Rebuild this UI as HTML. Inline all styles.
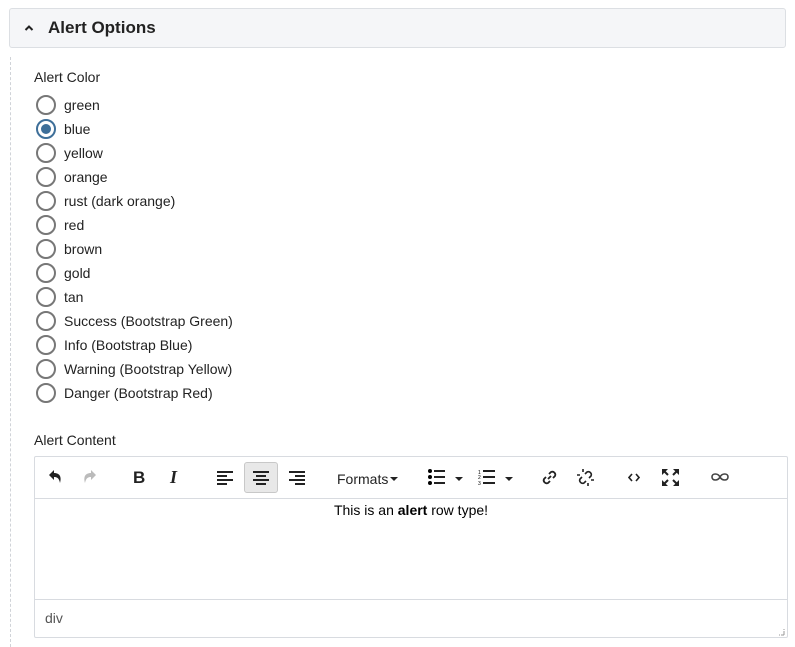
<!DOCTYPE html>
<html><head><style>
body{margin:0;width:795px;height:643px;background:#fff;font-family:"Liberation Sans",sans-serif;color:#222;position:relative;overflow:hidden}
.hdr{position:absolute;left:9px;top:8px;width:775px;height:38px;background:#f5f6f8;border:1px solid #dcdfe3;border-radius:3px}
.hdr .t{position:absolute;left:38px;top:9px;font-size:17px;font-weight:bold;color:#222}
.hdr svg{position:absolute;left:14px;top:15px}
.dash{position:absolute;left:10px;top:57px;height:590px;border-left:1px dashed #d0d3d8}
.lbl{position:absolute;left:34px;font-size:14px;color:#222}
.r{position:absolute;left:36px;width:16px;height:16px;border:2px solid #777;border-radius:50%;box-sizing:content-box}
.r.on{border-color:#3e6f99}
.r.on:after{content:"";position:absolute;left:3px;top:3px;width:10px;height:10px;border-radius:50%;background:#3e6f99}
.rt{position:absolute;left:64px;font-size:14px;color:#222}
.ed{position:absolute;left:34px;top:456px;width:752px;height:180px;border:1px solid #d8dbe0;border-radius:2px}
.tb{position:absolute;left:0;top:0;width:752px;height:41px;border-bottom:1px solid #d8dbe0}
.ct{position:absolute;left:0;top:42px;width:752px;text-align:center;font-size:14px;color:#000;line-height:22px}
.sb{position:absolute;left:0;top:142px;width:752px;height:38px;border-top:1px solid #d8dbe0}
.sb span{position:absolute;left:10px;top:10px;font-size:14px;color:#555}
.ic{position:absolute;top:12px}
.act{position:absolute;left:209px;top:5px;width:32px;height:29px;background:#e8e8e8;border:1px solid #c8c8c8;border-radius:3px}
</style></head><body>
<div class="hdr"><svg width="10" height="8" viewBox="0 0 10 8"><path d="M1.5 6 L5 2.5 L8.5 6" stroke="#222" stroke-width="2" fill="none"/></svg><span class="t">Alert Options</span></div>
<div class="dash"></div>
<div class="lbl" style="top:69px">Alert Color</div>
<div class="r" style="top:95px"></div><div class="rt" style="top:97px">green</div>
<div class="r on" style="top:119px"></div><div class="rt" style="top:121px">blue</div>
<div class="r" style="top:143px"></div><div class="rt" style="top:145px">yellow</div>
<div class="r" style="top:167px"></div><div class="rt" style="top:169px">orange</div>
<div class="r" style="top:191px"></div><div class="rt" style="top:193px">rust (dark orange)</div>
<div class="r" style="top:215px"></div><div class="rt" style="top:217px">red</div>
<div class="r" style="top:239px"></div><div class="rt" style="top:241px">brown</div>
<div class="r" style="top:263px"></div><div class="rt" style="top:265px">gold</div>
<div class="r" style="top:287px"></div><div class="rt" style="top:289px">tan</div>
<div class="r" style="top:311px"></div><div class="rt" style="top:313px">Success (Bootstrap Green)</div>
<div class="r" style="top:335px"></div><div class="rt" style="top:337px">Info (Bootstrap Blue)</div>
<div class="r" style="top:359px"></div><div class="rt" style="top:361px">Warning (Bootstrap Yellow)</div>
<div class="r" style="top:383px"></div><div class="rt" style="top:385px">Danger (Bootstrap Red)</div>
<div class="lbl" style="top:432px">Alert Content</div>
<div class="ed">
<div class="tb">
<svg class="ic" style="left:12px" width="16" height="16" viewBox="0 0 16 16"><path d="M2 6 L7 1 V4 C12 4 15 7 13 14 C12 9 10 8 7 8 V11 Z" fill="#222"/></svg>
<svg class="ic" style="left:47px" width="16" height="16" viewBox="0 0 16 16"><path d="M14 6 L9 1 V4 C4 4 1 7 3 14 C4 9 6 8 9 8 V11 Z" fill="#bbb"/></svg>
<span class="ic" style="left:98px;top:11px;font-weight:bold;font-size:17px">B</span>
<span class="ic" style="left:135px;top:10px;font-weight:bold;font-style:italic;font-size:18px;font-family:'Liberation Serif',serif">I</span>
<div class="act"></div>
<svg class="ic" style="left:182px;top:14px" width="16" height="14"><path d="M0 1h16M0 5h10M0 9h16M0 13h10" stroke="#222" stroke-width="2"/></svg>
<svg class="ic" style="left:218px;top:14px" width="16" height="14"><path d="M0 1h16M3 5h10M0 9h16M3 13h10" stroke="#222" stroke-width="2"/></svg>
<svg class="ic" style="left:254px;top:14px" width="16" height="14"><path d="M0 1h16M6 5h10M0 9h16M6 13h10" stroke="#222" stroke-width="2"/></svg>
<span class="ic" style="left:302px;top:14px;font-size:14px">Formats</span>
<svg class="ic" style="left:355px;top:20px" width="8" height="5"><path d="M0 0h8L4 4z" fill="#222"/></svg>
<svg class="ic" style="left:393px;top:12px" width="17" height="16"><circle cx="2" cy="2" r="2"/><circle cx="2" cy="8" r="2"/><circle cx="2" cy="14" r="2"/><path d="M6 2h11M6 8h11M6 14h11" stroke="#222" stroke-width="2"/></svg>
<svg class="ic" style="left:420px;top:20px" width="8" height="5"><path d="M0 0h8L4 4z" fill="#222"/></svg>
<svg class="ic" style="left:443px;top:12px" width="17" height="16"><text x="0" y="5" font-size="5" font-family="Liberation Sans">1</text><text x="0" y="10" font-size="5" font-family="Liberation Sans">2</text><text x="0" y="16" font-size="5" font-family="Liberation Sans">3</text><path d="M5 2h12M5 8h12M5 14h12" stroke="#222" stroke-width="2"/></svg>
<svg class="ic" style="left:470px;top:20px" width="8" height="5"><path d="M0 0h8L4 4z" fill="#222"/></svg>
<svg class="ic" style="left:506px" width="17" height="17" viewBox="0 0 17 17"><path d="M7 10l3-3M8 5l2-2a3 3 0 014 4l-2 2M9 12l-2 2a3 3 0 01-4-4l2-2" stroke="#222" stroke-width="1.8" fill="none"/></svg>
<svg class="ic" style="left:542px" width="17" height="17" viewBox="0 0 17 17"><path d="M8 5l2-2a3 3 0 014 4l-2 2M9 12l-2 2a3 3 0 01-4-4l2-2M6 0v3M0 6h3M11 17v-3M17 11h-3" stroke="#222" stroke-width="1.6" fill="none"/></svg>
<svg class="ic" style="left:593px;top:16px" width="12" height="9"><path d="M4 1L1 4.5 4 8M8 1l3 3.5L8 8" stroke="#222" stroke-width="1.6" fill="none"/></svg>
<svg class="ic" style="left:627px" width="17" height="17"><path d="M0 0h6L0 6zM17 0h-6l6 6zM0 17h6L0 11zM17 17h-6l6-6z" fill="#222"/><path d="M2 2l4 4M15 2l-4 4M2 15l4-4M15 15l-4-4" stroke="#222" stroke-width="2"/></svg>
<svg class="ic" style="left:676px;top:15px" width="18" height="10"><path d="M9 5C7 1 1 1 1 5s6 4 8 0 8-4 8 0-6 4-8 0" stroke="#444" stroke-width="1.6" fill="none"/></svg>
</div>
<div class="ct">This is an <b>alert</b> row type!</div>
<div class="sb"><span>div</span><svg style="position:absolute;right:2px;bottom:2px" width="8" height="8"><path d="M7 1v6H1" stroke="#999" stroke-dasharray="1 1" fill="none"/><path d="M7 4v3H4" stroke="#999" stroke-dasharray="1 1" fill="none"/></svg></div>
</div>
</body></html>
